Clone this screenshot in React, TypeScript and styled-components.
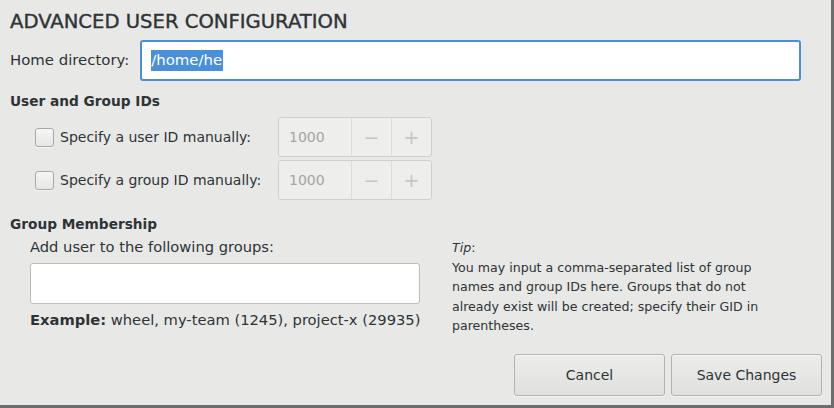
import React from 'react'
import styled, { createGlobalStyle } from 'styled-components'

const GlobalStyle = createGlobalStyle`
  html, body {
    margin: 0;
    padding: 0;
    background: #e8e8e7;
  }
  body {
    font-family: "DejaVu Sans", "Liberation Sans", sans-serif;
    color: #2e3436;
  }
`

interface spinInterface {
  value: string,
}

const Dialog = styled.div`
  box-sizing: border-box;
  width: 834px;
  height: 408px;
  padding: 10px 10px 0 10px;
  background: #e8e8e7;
  border-right: 3px solid #6d6d6d;
  border-bottom: 3px solid #6d6d6d;
  display: flex;
  flex-direction: column;
`

const Title = styled.h1`
  margin: 0;
  font-size: 19.6px;
  font-weight: normal;
  line-height: 24px;
  -webkit-text-stroke: 0.4px #2e3436;
`

const HomeRow = styled.div`
  display: flex;
  align-items: center;
  margin-top: 6px;
  height: 40px;
`

const Label = styled.span<{ size?: number }>`
  font-size: ${p => p.size ?? 14}px;
  white-space: nowrap;
`

const Entry = styled.div<{ focused?: boolean }>`
  box-sizing: border-box;
  height: 41px;
  flex: 1;
  margin-left: 11px;
  margin-right: 20px;
  display: flex;
  align-items: center;
  padding-left: 9px;
  background: #ffffff;
  border: ${p => p.focused ? '2px solid #4a90d9' : '1px solid #b9b9b6'};
  border-radius: 3px;
  font-size: 14.9px;
`

const Selected = styled.span`
  background: #4a90d9;
  color: #ffffff;
  line-height: 21px;
  padding-right: 1px;
`

const SectionTitle = styled.h2`
  margin: 0;
  font-size: 13.7px;
  font-weight: bold;
  line-height: 18px;
`

const IdGrid = styled.div`
  display: grid;
  grid-template-columns: 243px 154px;
  row-gap: 3px;
  padding-left: 25px;
  margin-top: 7px;
`

const CheckLabel = styled.label`
  display: flex;
  align-items: center;
  gap: 6px;
  font-size: 14px;
`

const CheckBox = styled.span`
  box-sizing: border-box;
  width: 19px;
  height: 19px;
  border: 1px solid #a8a8a5;
  border-radius: 3px;
  background: linear-gradient(#f6f6f6, #e6e6e5);
  box-shadow: 0 1px 0 rgba(255, 255, 255, 0.6);
`

const Spin = styled.div`
  box-sizing: border-box;
  height: 40px;
  display: grid;
  grid-template-columns: 72px 40px 1fr;
  border: 1px solid #cfcfcd;
  border-radius: 3px;
  background: #eeeeec;
  color: #a5a5a3;
  font-size: 14px;
`

const SpinCell = styled.div<{ divided?: boolean, center?: boolean }>`
  display: flex;
  align-items: center;
  justify-content: ${p => p.center ? 'center' : 'flex-start'};
  padding-left: ${p => p.center ? 0 : 10}px;
  border-left: ${p => p.divided ? '1px solid #dcdcda' : 'none'};
  font-size: ${p => p.center ? 19 : 14}px;
  color: ${p => p.center ? '#c6c6c4' : '#a5a5a3'};
`

const GroupSection = styled.div`
  margin-top: 15px;
`

const GroupGrid = styled.div`
  display: grid;
  grid-template-columns: 390px 1fr;
  column-gap: 32px;
  padding-left: 20px;
  margin-top: 5px;
`

const Column = styled.div`
  display: flex;
  flex-direction: column;
`

const GroupsEntry = styled.div`
  box-sizing: border-box;
  height: 41px;
  margin-top: 8px;
  background: #ffffff;
  border: 1px solid #bdbdba;
  border-radius: 3px;
`

const Example = styled.div`
  margin-top: 7px;
  font-size: 14.7px;
  white-space: nowrap;

  b {
    font-weight: bold;
  }
`

const Tip = styled.p`
  margin: 0;
  max-width: 318px;
  font-size: 12.6px;
  line-height: 19.5px;
  padding-top: 0;

  i {
    font-style: italic;
  }
`

const ButtonRow = styled.div`
  display: flex;
  justify-content: flex-end;
  gap: 6px;
  margin-top: 18px;
  margin-right: -1px;
`

const Button = styled.button`
  box-sizing: border-box;
  width: 151px;
  height: 42px;
  border: 1px solid #b2b2b0;
  border-radius: 3px;
  background: linear-gradient(#ececeb, #e0e0df);
  box-shadow: inset 0 1px 0 rgba(255, 255, 255, 0.7), 0 1px 0 rgba(255, 255, 255, 0.5);
  color: #2e3436;
  font-family: "DejaVu Sans", "Liberation Sans", sans-serif;
  font-size: 14px;
  padding: 0;
`

const SpinButton: React.FC<spinInterface> = (props) => {
  return <Spin>
    <SpinCell>{props.value}</SpinCell>
    <SpinCell divided center>−</SpinCell>
    <SpinCell divided center>+</SpinCell>
  </Spin>
}

const App: React.FC = () => {
  return <>
    <GlobalStyle />
    <Dialog>
      <Title>ADVANCED USER CONFIGURATION</Title>
      <HomeRow>
        <Label size={14.9}>Home directory:</Label>
        <Entry focused>
          <Selected>/home/he</Selected>
        </Entry>
      </HomeRow>

      <div style={{ marginTop: 12 }}>
        <SectionTitle>User and Group IDs</SectionTitle>
        <IdGrid>
          <CheckLabel>
            <CheckBox />
            Specify a user ID manually:
          </CheckLabel>
          <SpinButton value='1000' />
          <CheckLabel>
            <CheckBox />
            Specify a group ID manually:
          </CheckLabel>
          <SpinButton value='1000' />
        </IdGrid>
      </div>

      <GroupSection>
        <SectionTitle>Group Membership</SectionTitle>
        <GroupGrid>
          <Column>
            <Label size={14.7}>Add user to the following groups:</Label>
            <GroupsEntry />
            <Example>
              <b>Example:</b> wheel, my-team (1245), project-x (29935)
            </Example>
          </Column>
          <Column>
            <Tip>
              <i>Tip</i>:<br />
              You may input a comma-separated list of group names and group IDs here. Groups that do not already exist will be created; specify their GID in parentheses.
            </Tip>
            <ButtonRow>
              <Button>Cancel</Button>
              <Button>Save Changes</Button>
            </ButtonRow>
          </Column>
        </GroupGrid>
      </GroupSection>
    </Dialog>
  </>
}

export default App
